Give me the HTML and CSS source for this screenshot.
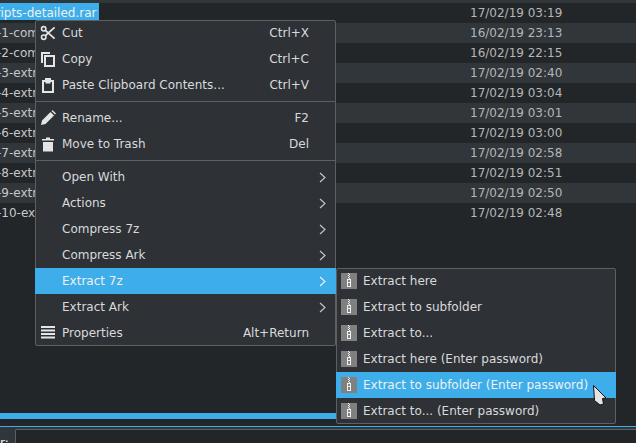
FILE: index.html
```html
<!DOCTYPE html>
<html lang="en">
<head>
<meta charset="utf-8">
<title>Dolphin context menu</title>
<link rel="stylesheet" href="styles.css">
</head>
<body>
<div class="window">
  <div class="header"></div>
  <div class="list">
    <div class="row"><span class="name selected">ripts-detailed.rar</span><span class="date">17/02/19 03:19</span></div>
    <div class="row alt"><span class="name">-1-com</span><span class="date">16/02/19 23:13</span></div>
    <div class="row"><span class="name">-2-com</span><span class="date">16/02/19 22:15</span></div>
    <div class="row alt"><span class="name">-3-extr</span><span class="date">17/02/19 02:40</span></div>
    <div class="row"><span class="name">-4-extr</span><span class="date">17/02/19 03:04</span></div>
    <div class="row alt"><span class="name">-5-extr</span><span class="date">17/02/19 03:01</span></div>
    <div class="row"><span class="name">-6-extr</span><span class="date">17/02/19 03:00</span></div>
    <div class="row alt"><span class="name">-7-extr</span><span class="date">17/02/19 02:58</span></div>
    <div class="row"><span class="name">-8-extr</span><span class="date">17/02/19 02:51</span></div>
    <div class="row alt"><span class="name">-9-extr</span><span class="date">17/02/19 02:50</span></div>
    <div class="row"><span class="name">-10-ex</span><span class="date">17/02/19 02:48</span></div>
  </div>
  <div class="progress"></div>
  <div class="footer">
    <span class="label">r:</span>
    <div class="input"></div>
  </div>
</div>

<div class="menu main-menu">
  <div class="item">
    <svg class="icon" viewBox="0 0 16 16"><g fill="none" stroke="#e4e5e6" stroke-width="1.6"><circle cx="3.7" cy="3.8" r="2.2"/><circle cx="3.7" cy="12.2" r="2.2"/><path d="M5.4 5.3 14.6 13.6M5.4 10.7 14.6 2.4" stroke-width="1.8"/></g></svg>
    <span>Cut</span><span class="shortcut">Ctrl+X</span>
  </div>
  <div class="item">
    <svg class="icon" viewBox="0 0 16 16"><path fill="#e4e5e6" fill-rule="evenodd" d="M1 1h9v2H3v9H1zM4 4h11v12H4zM6 6v8h7V6z"/></svg>
    <span>Copy</span><span class="shortcut">Ctrl+C</span>
  </div>
  <div class="item">
    <svg class="icon" viewBox="0 0 16 16"><path fill="#e4e5e6" fill-rule="evenodd" d="M2 3h3V1h6v2h3v13H2zM4 5v9h8V5H10.500V6.500H5.500V5z"/></svg>
    <span>Paste Clipboard Contents...</span><span class="shortcut">Ctrl+V</span>
  </div>
  <div class="separator"></div>
  <div class="item">
    <svg class="icon" viewBox="0 0 16 16"><path fill="#e4e5e6" d="M1 15l1-4.500L10.500 2l3.500 3.500L5.500 14zM11.500 1l1-1 3.500 3.500-1 1z"/></svg>
    <span>Rename...</span><span class="shortcut">F2</span>
  </div>
  <div class="item">
    <svg class="icon" viewBox="0 0 16 16"><path fill="#e4e5e6" d="M2 3h4V1.500h4V3h4v1.500H2zM3 6h10v9.500H3z"/></svg>
    <span>Move to Trash</span><span class="shortcut">Del</span>
  </div>
  <div class="separator"></div>
  <div class="item">
    <span class="blank"></span><span>Open With</span>
    <svg class="arrow" viewBox="0 0 7 11"><path fill="none" stroke="#c8cacb" stroke-width="1.100" d="M1 1l5 4.500L1 10"/></svg>
  </div>
  <div class="item">
    <span class="blank"></span><span>Actions</span>
    <svg class="arrow" viewBox="0 0 7 11"><path fill="none" stroke="#c8cacb" stroke-width="1.100" d="M1 1l5 4.500L1 10"/></svg>
  </div>
  <div class="item">
    <span class="blank"></span><span>Compress 7z</span>
    <svg class="arrow" viewBox="0 0 7 11"><path fill="none" stroke="#c8cacb" stroke-width="1.100" d="M1 1l5 4.500L1 10"/></svg>
  </div>
  <div class="item">
    <span class="blank"></span><span>Compress Ark</span>
    <svg class="arrow" viewBox="0 0 7 11"><path fill="none" stroke="#c8cacb" stroke-width="1.100" d="M1 1l5 4.500L1 10"/></svg>
  </div>
  <div class="item active">
    <span class="blank"></span><span>Extract 7z</span>
    <svg class="arrow" viewBox="0 0 7 11"><path fill="none" stroke="#eff0f1" stroke-width="1.100" d="M1 1l5 4.500L1 10"/></svg>
  </div>
  <div class="item">
    <span class="blank"></span><span>Extract Ark</span>
    <svg class="arrow" viewBox="0 0 7 11"><path fill="none" stroke="#c8cacb" stroke-width="1.100" d="M1 1l5 4.500L1 10"/></svg>
  </div>
  <div class="item">
    <svg class="icon" viewBox="0 0 16 16"><path fill="#e4e5e6" d="M1 1h14v2H1zM1 4.500h14v2H1zM1 8h14v2H1zM1 11.500h14v2H1z"/></svg>
    <span>Properties</span><span class="shortcut">Alt+Return</span>
  </div>
</div>

<div class="menu sub-menu">
  <div class="item">
    <svg class="icon" viewBox="0 0 16 16"><rect width="16" height="16" fill="#808080"/><path fill="#f0f0f0" d="M7 0h1v1H7zM8 1h1v1H8zM7 2h1v1H7zM8 3h1v1H8zM7 4h1v1H7zM8 5h1v1H8zM6 6h4v8H6zM7 7v2h2V7zM7 10v3h2v-3z"/></svg>
    <span>Extract here</span>
  </div>
  <div class="item">
    <svg class="icon" viewBox="0 0 16 16"><rect width="16" height="16" fill="#808080"/><path fill="#f0f0f0" d="M7 0h1v1H7zM8 1h1v1H8zM7 2h1v1H7zM8 3h1v1H8zM7 4h1v1H7zM8 5h1v1H8zM6 6h4v8H6zM7 7v2h2V7zM7 10v3h2v-3z"/></svg>
    <span>Extract to subfolder</span>
  </div>
  <div class="item">
    <svg class="icon" viewBox="0 0 16 16"><rect width="16" height="16" fill="#808080"/><path fill="#f0f0f0" d="M7 0h1v1H7zM8 1h1v1H8zM7 2h1v1H7zM8 3h1v1H8zM7 4h1v1H7zM8 5h1v1H8zM6 6h4v8H6zM7 7v2h2V7zM7 10v3h2v-3z"/></svg>
    <span>Extract to...</span>
  </div>
  <div class="item">
    <svg class="icon" viewBox="0 0 16 16"><rect width="16" height="16" fill="#808080"/><path fill="#f0f0f0" d="M7 0h1v1H7zM8 1h1v1H8zM7 2h1v1H7zM8 3h1v1H8zM7 4h1v1H7zM8 5h1v1H8zM6 6h4v8H6zM7 7v2h2V7zM7 10v3h2v-3z"/></svg>
    <span>Extract here (Enter password)</span>
  </div>
  <div class="item active">
    <svg class="icon" viewBox="0 0 16 16"><rect width="16" height="16" fill="#808080"/><path fill="#f0f0f0" d="M7 0h1v1H7zM8 1h1v1H8zM7 2h1v1H7zM8 3h1v1H8zM7 4h1v1H7zM8 5h1v1H8zM6 6h4v8H6zM7 7v2h2V7zM7 10v3h2v-3z"/></svg>
    <span>Extract to subfolder (Enter password)</span>
  </div>
  <div class="item">
    <svg class="icon" viewBox="0 0 16 16"><rect width="16" height="16" fill="#808080"/><path fill="#f0f0f0" d="M7 0h1v1H7zM8 1h1v1H8zM7 2h1v1H7zM8 3h1v1H8zM7 4h1v1H7zM8 5h1v1H8zM6 6h4v8H6zM7 7v2h2V7zM7 10v3h2v-3z"/></svg>
    <span>Extract to... (Enter password)</span>
  </div>
</div>

<svg class="cursor" viewBox="0 0 16 23"><path fill="#e4e4e4" stroke="#111" stroke-width="1" d="M1.500 1.500 14 14l-3.500.5 1 5.500-3.500 1-5.500-4.500z"/></svg>
</body>
</html>
```

FILE: styles.css
```css
html, body {
  margin: 0;
  padding: 0;
  width: 636px;
  height: 443px;
  overflow: hidden;
  background: #232629;
  font-family: "DejaVu Sans", sans-serif;
  font-size: 12px;
}

.window {
  display: flex;
  flex-direction: column;
  height: 443px;
}

.header {
  height: 3px;
  background: #31363b;
  flex: none;
}

.list {
  flex: none;
  height: 410px;
  overflow: hidden;
}

.row {
  display: grid;
  grid-template-columns: 470px 1fr;
  height: 20px;
  line-height: 20px;
  color: #c6c8c9;
  white-space: nowrap;
}

.row.alt {
  background: #31363b;
}

.name {
  overflow: hidden;
  text-indent: -3px;
}

.name.selected {
  justify-self: start;
  width: 99px;
  height: 17px;
  line-height: 20px;
  text-indent: -4.500px;
  background: #3daee9;
  color: #eff0f1;
}

.date {
  color: #b4b6b7;
}

.progress {
  flex: none;
  width: 480px;
  height: 6px;
  background: #3daee9;
}

.footer {
  flex: none;
  margin-top: 7px;
  height: 17px;
  border-top: 1px solid #3daee9;
  background: #31363b;
  display: flex;
  overflow: hidden;
}

.label {
  flex: none;
  width: 15px;
  padding-top: 8px;
  box-sizing: border-box;
  color: #eff0f1;
  line-height: 16px;
}

.input {
  flex: 1;
  margin-top: 2px;
  border-top: 1px solid #5d6165;
  border-left: 1px solid #5d6165;
  border-top-left-radius: 2px;
  background: #232629;
}

.menu {
  position: absolute;
  box-sizing: border-box;
  border: 1px solid #5d6063;
  border-radius: 2px;
  background: #2e3136;
  color: #d8dadb;
}

.main-menu {
  left: 35px;
  top: 20px;
  width: 301px;
  height: 326px;
}

.sub-menu {
  left: 336px;
  top: 268px;
  width: 280px;
  height: 156px;
}

.item {
  display: flex;
  align-items: center;
  height: 26px;
  padding: 0 9px 0 4px;
  white-space: nowrap;
}

.item:first-child {
  margin-top: -1px;
}

.item:last-child {
  margin-bottom: -1px;
}

.item.active {
  margin: 0 -1px;
  padding: 0 10px 0 5px;
  background: #3daee9;
  color: #eff0f1;
}

.icon,
.blank {
  flex: none;
  width: 16px;
  height: 16px;
  margin-right: 6px;
}

.shortcut {
  margin-left: auto;
  padding-right: 17px;
}

.arrow {
  flex: none;
  margin-left: auto;
  width: 7px;
  height: 11px;
}

.separator {
  height: 1px;
  margin: 3px 0;
  background: #5d6063;
}

.cursor {
  position: absolute;
  left: 592px;
  top: 384px;
  width: 16px;
  height: 23px;
}
```
